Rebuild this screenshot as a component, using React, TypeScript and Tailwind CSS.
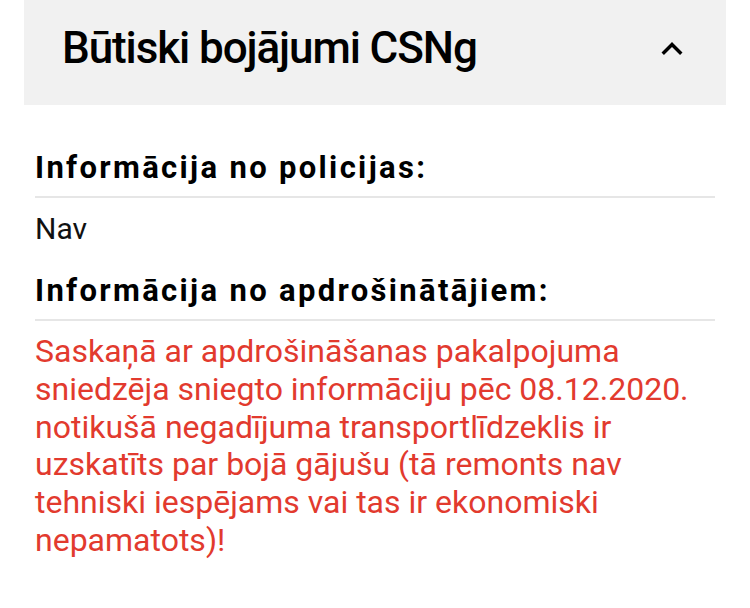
const ChevronUp = () => (
    <svg width="42" height="42" viewBox="0 0 24 24" fill="currentColor">
        <path d="M12 8l-6 6 1.41 1.41L12 10.83l4.59 4.58L18 14z" />
    </svg>
);

const SectionTitle = ({ children }: { children: string }) => (
    <div className="border-b-2 border-[#e6e6e6] pb-[10px]">
        <h3 className="text-[31px] leading-[36px] font-bold tracking-[0.075em] text-black">{children}</h3>
    </div>
);

export default function App() {
    return (
        <div className="min-h-[608px] bg-white px-[24px] font-['Roboto',sans-serif]">
            {/* Accordion header */}
            <div className="flex h-[105px] items-start justify-between bg-[#f1f1f1] pl-[38px] pr-[33px] pt-[22px]">
                <h2 className="text-[44px] leading-[52px] font-medium tracking-[-0.025em] text-black">Būtiski bojājumi CSNg</h2>
                <div className="mt-[6px] text-black">
                    <ChevronUp />
                </div>
            </div>

            {/* Accordion body */}
            <div className="mx-[11px] pt-[45px]">
                <SectionTitle>Informācija no policijas:</SectionTitle>
                <p className="mt-[12px] text-[30px] leading-[38px] text-[#111]">Nav</p>

                <div className="mt-[25px]">
                    <SectionTitle>Informācija no apdrošinātājiem:</SectionTitle>
                </div>
                <p className="mt-[12px] text-[32px] leading-[37.8px] text-[#e23a2e]">
                    Saskaņā ar apdrošināšanas pakalpojuma sniedzēja sniegto informāciju pēc 08.12.2020. notikušā negadījuma transportlīdzeklis ir uzskatīts par bojā gājušu (tā remonts nav tehniski iespējams vai tas ir ekonomiski nepamatots)!
                </p>
            </div>
        </div>
    );
}
